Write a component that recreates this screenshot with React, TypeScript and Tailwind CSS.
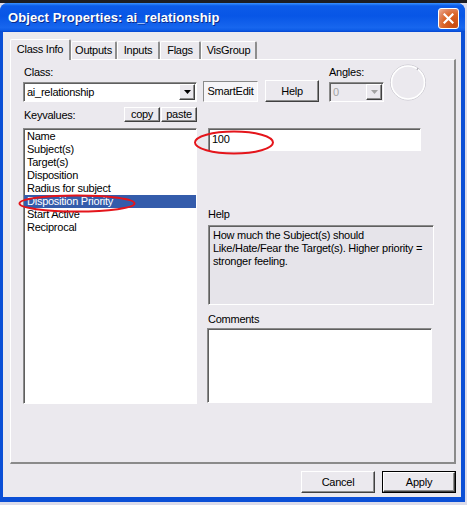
const raised =
  "border border-t-white border-l-white border-r-[#404040] border-b-[#404040] shadow-[inset_-1px_-1px_0_#8d8d8d]";
const sunken =
  "border border-t-[#8a8a8a] border-l-[#8a8a8a] border-r-white border-b-white shadow-[inset_1px_1px_0_#5f5f5f]";

const keys = [
  "Name",
  "Subject(s)",
  "Target(s)",
  "Disposition",
  "Radius for subject",
  "Disposition Priority",
  "Start Active",
  "Reciprocal",
];

const tabs = [
  { label: "Class Info", w: "w-[61px]", active: true },
  { label: "Outputs", w: "w-[46px]", active: false },
  { label: "Inputs", w: "w-[43px]", active: false },
  { label: "Flags", w: "w-[41px]", active: false },
  { label: "VisGroup", w: "w-[56px]", active: false },
];

function Arrow({ color }: { color: string }) {
  return (
    <svg width="7" height="4" viewBox="0 0 7 4">
      <path d="M0 0h7L3.5 4z" fill={color} />
    </svg>
  );
}

function Combo({
  value,
  width,
  disabled = false,
}: {
  value: string;
  width: string;
  disabled?: boolean;
}) {
  return (
    <div
      className={`flex h-[20px] ${width} items-center ${
        disabled ? "bg-[#ebe9ee] text-[#a3a3a3]" : "bg-white"
      } ${sunken}`}
    >
      <span className="flex-1 pl-[3px]">{value}</span>
      <span
        className={`mr-px flex h-[16px] w-[16px] items-center justify-center bg-[#ebe9ee] ${raised}`}
      >
        <Arrow color={disabled ? "#a3a3a3" : "#000"} />
      </span>
    </div>
  );
}

function Button({ label, className }: { label: string; className: string }) {
  return (
    <div
      className={`flex items-center justify-center bg-[#ebe9ee] ${raised} ${className}`}
    >
      {label}
    </div>
  );
}

export default function App() {
  return (
    <div className="flex h-[505px] w-[467px] flex-col overflow-hidden bg-[#dcdcea] text-[11px] leading-[13px] tracking-[-0.25px] text-black [font-family:'Liberation_Sans',Arial,sans-serif]">
      <div className="h-[3px] shrink-0 bg-[#1d1d22]" />
      <div className="flex h-[499px] w-[465px] flex-col rounded-t-[8px] bg-[#0b4fd6] px-[3px] pb-[5px] pr-[4px]">
        {/* title bar */}
        <div className="-mx-[3px] -mr-[4px] flex h-[29px] shrink-0 items-center justify-between rounded-t-[8px] bg-[linear-gradient(180deg,#3a93ff_0%,#0c5be8_10%,#0856e6_45%,#1766ee_85%,#0e5de8_93%,#0545cf_100%)] pl-[8px] pr-[6px]">
          <span className="text-[13px] font-bold tracking-[0.1px] text-white [text-shadow:1px_1px_0_#0a2a8a]">
            Object Properties: ai_relationship
          </span>
          <span className="mt-px flex h-[21px] w-[21px] items-center justify-center rounded-[3px] border border-white bg-[radial-gradient(circle_at_80%_85%,#c64a12_0%,#dc6527_50%,#e08660_75%,#f3b69a_100%)]">
            <svg width="11" height="11" viewBox="0 0 11 11">
              <path
                d="M1.5 1.5l8 8M9.5 1.5l-8 8"
                stroke="#fff"
                strokeWidth="2.2"
                strokeLinecap="square"
              />
            </svg>
          </span>
        </div>

        {/* client */}
        <div className="flex flex-1 flex-col bg-[#ebe9ee]">
          {/* tabs */}
          <div className="ml-[7px] mt-[7px] flex h-[20px] items-end">
            {tabs.map((t) => (
              <div
                key={t.label}
                className={`flex ${t.w} items-center justify-center rounded-t-[2px] border-l border-t border-r-2 border-l-white border-t-white border-r-[#8d8d8d] bg-[#ebe9ee] ${
                  t.active
                    ? "relative z-10 -mb-px h-[21px] pb-[2px]"
                    : "h-[18px]"
                }`}
              >
                {t.label}
              </div>
            ))}
          </div>

          {/* panel */}
          <div className="relative ml-[7px] h-[405px] w-[446px] border-l border-t border-r-2 border-b-2 border-l-white border-t-white border-r-[#8a8a8a] border-b-[#8a8a8a] pl-[12px] pt-[6px]">
            {/* top row */}
            <div className="flex items-end">
              <div className="flex w-[174px] flex-col gap-[3px]">
                <span className="pl-px">Class:</span>
                <Combo value="ai_relationship" width="w-[174px]" />
              </div>
              <div className="ml-[6px] flex h-[21px] w-[55px] items-center justify-center border border-b-white border-l-[#8a8a8a] border-r-white border-t-[#8a8a8a] bg-[#f6f5f8]">
                SmartEdit
              </div>
              <Button label="Help" className="ml-[7px] h-[22px] w-[54px]" />
              <div className="ml-[10px] flex w-[55px] flex-col gap-[3px]">
                <span>Angles:</span>
                <Combo value="0" width="w-[55px]" disabled />
              </div>
              <svg
                className="-mt-[4px] ml-[4px]"
                width="40"
                height="39"
                viewBox="0 0 40 39"
              >
                <circle cx="20" cy="19.5" r="17.5" fill="none" stroke="#c9c7cf" strokeWidth="1" />
                <circle cx="20" cy="19.5" r="16.5" fill="none" stroke="#ffffff" strokeWidth="1.6" />
                <path d="M30 5l-1 2" stroke="#b3b1b8" strokeWidth="1.2" />
              </svg>
            </div>

            {/* main area */}
            <div className="mt-[4px] flex">
              <div className="flex w-[174px] flex-col">
                <div className="flex h-[16px] items-end justify-between">
                  <span className="pl-px">Keyvalues:</span>
                  <div className="flex gap-px">
                    <Button label="copy" className="h-[15px] w-[36px]" />
                    <Button label="paste" className="h-[15px] w-[36px]" />
                  </div>
                </div>
                <div className={`mt-[6px] h-[276px] bg-white pt-px ${sunken}`}>
                  {keys.map((k) => (
                    <div
                      key={k}
                      className={`h-[13px] pl-[3px] ${
                        k === "Disposition Priority"
                          ? "bg-[#345cab] text-white"
                          : ""
                      }`}
                    >
                      {k}
                    </div>
                  ))}
                </div>
              </div>

              <div className="ml-[11px] flex flex-col pt-[22px]">
                <div className={`flex h-[23px] w-[213px] items-center bg-white pl-[3px] ${sunken}`}>
                  100
                </div>
                <span className="mt-[57px]">Help</span>
                <div
                  className={`mt-[4px] h-[80px] w-[226px] whitespace-nowrap bg-[#e6e4ea] pl-[4px] pt-[3px] ${sunken}`}
                >
                  <div>How much the Subject(s) should</div>
                  <div>Like/Hate/Fear the Target(s). Higher priority =</div>
                  <div>stronger feeling.</div>
                </div>
                <span className="mt-[8px]">Comments</span>
                <div className={`-ml-px mt-[2px] h-[75px] w-[225px] bg-white ${sunken}`} />
              </div>
            </div>

            {/* red annotation ellipses */}
            <svg
              className="pointer-events-none absolute left-[182px] top-[70px]"
              width="82"
              height="25"
              viewBox="0 0 82 25"
            >
              <ellipse cx="41" cy="12.5" rx="39" ry="11" fill="none" stroke="#e4151b" strokeWidth="2" />
            </svg>
            <svg
              className="pointer-events-none absolute left-[7px] top-[134px]"
              width="118"
              height="19"
              viewBox="0 0 118 19"
            >
              <ellipse cx="59" cy="9.5" rx="57.5" ry="8" fill="none" stroke="#e4151b" strokeWidth="2" />
            </svg>
          </div>

          {/* bottom buttons */}
          <div className="mr-[5px] mt-[7px] flex justify-end gap-[7px]">
            <Button label="Cancel" className="h-[22px] w-[74px]" />
            <div className="border border-black">
              <Button label="Apply" className="h-[20px] w-[72px]" />
            </div>
          </div>
        </div>
      </div>
    </div>
  );
}
